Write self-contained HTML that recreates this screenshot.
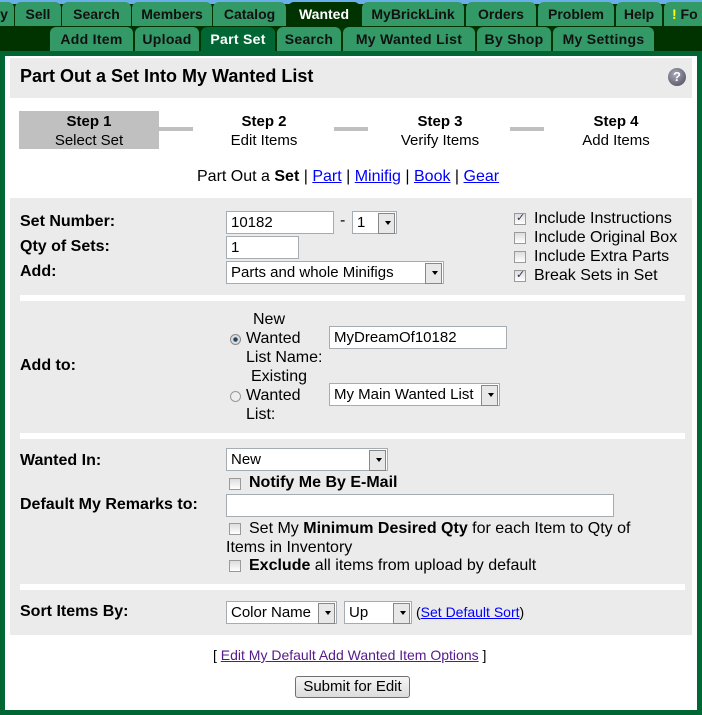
<!DOCTYPE html>
<html><head><style>
*{box-sizing:border-box}
body{margin:0;width:702px;height:715px;background:#003300;font-family:"Liberation Sans",sans-serif;position:relative;overflow:hidden;color:#000}
.a{position:absolute;white-space:nowrap}
.t{position:absolute;height:24px;background:#339966;border-radius:6px 6px 0 0;font-weight:bold;font-size:14px;text-align:center;line-height:24px;color:#111}
.t2{top:27px;height:24px;font-size:14px;letter-spacing:0.3px}
.lbl{position:absolute;font-weight:bold;font-size:16px}
.in{position:absolute;background:#fff;border:1px solid #a5acb2;font-size:15px;padding-left:4px;line-height:21px;height:23px}
.sel{position:absolute;background:#fff;border:1px solid #a5acb2;font-size:15px;padding-left:4px;line-height:21px;height:23px}
.sel:after{content:"";position:absolute;right:1px;top:1px;width:15px;height:19px;background:#e8e8e8;border:1px solid #888}
.sel b{position:absolute;right:5px;top:9px;width:0;height:0;border:3px solid transparent;border-top:4px solid #000;z-index:2}
.cb{position:absolute;width:12px;height:12px;border:1px solid #9a9a9a;background:linear-gradient(#ddd,#fff)}
.cb.c:after{content:"✓";position:absolute;left:1px;top:-3px;font-size:11px;color:#335}
.tx{position:absolute;font-size:16px;white-space:nowrap}
.sep{position:absolute;left:20px;width:665px;height:6px;background:#fff}
a{color:#00f}
</style></head><body>
<div class="a" style="left:0;top:0;width:702px;height:4px;background:#6ab0e8"></div>
<div class="t" style="left:-6px;width:20px;top:2px">y</div>
<div class="t" style="left:15px;width:46px;top:2px">Sell</div>
<div class="t" style="left:62px;width:69px;top:2px">Search</div>
<div class="t" style="left:132px;width:80px;top:2px">Members</div>
<div class="t" style="left:213px;width:73px;top:2px">Catalog</div>
<div class="t" style="left:288px;width:72px;top:2px;background:#003300;color:#fff">Wanted</div>
<div class="t" style="left:362px;width:102px;top:2px">MyBrickLink</div>
<div class="t" style="left:466px;width:70px;top:2px">Orders</div>
<div class="t" style="left:538px;width:76px;top:2px">Problem</div>
<div class="t" style="left:616px;width:46px;top:2px">Help</div>
<div class="t" style="left:664px;width:50px;top:2px;text-align:left;padding-left:8px"><span style="color:#ff0">!</span> Fo</div>
<div class="t t2" style="left:50px;width:83px">Add Item</div>
<div class="t t2" style="left:135px;width:64px">Upload</div>
<div class="t t2" style="left:201px;width:74px;background:#006633;color:#fff">Part Set</div>
<div class="t t2" style="left:277px;width:64px">Search</div>
<div class="t t2" style="left:343px;width:132px">My Wanted List</div>
<div class="t t2" style="left:477px;width:74px">By Shop</div>
<div class="t t2" style="left:553px;width:101px">My Settings</div>
<div class="a" style="left:0;top:51px;width:702px;height:664px;background:#006633"></div>
<div class="a" style="left:5px;top:56px;width:692px;height:654px;background:#fff"></div>
<div class="a" style="left:10px;top:58px;width:682px;height:40px;background:#ebebeb"></div>
<div class="a" style="left:20px;top:66px;font-size:18px;font-weight:bold">Part Out a Set Into My Wanted List</div>
<div class="a" style="left:668px;top:68px;width:18px;height:18px;border-radius:50%;background:radial-gradient(circle at 40% 35%,#aab,#445);color:#fff;font-weight:bold;font-size:13px;text-align:center;line-height:18px">?</div>
<div class="a" style="left:19px;top:111px;width:140px;height:38px;background:#c0c0c0"></div>
<div class="a" style="left:159px;top:127px;width:34px;height:4px;background:#c0c0c0"></div>
<div class="a" style="left:334px;top:127px;width:34px;height:4px;background:#c0c0c0"></div>
<div class="a" style="left:510px;top:127px;width:34px;height:4px;background:#c0c0c0"></div>
<div class="a" style="left:19px;top:112px;width:140px;text-align:center;font-size:15px;line-height:19px"><b>Step 1</b><br>Select Set</div>
<div class="a" style="left:194px;top:112px;width:140px;text-align:center;font-size:15px;line-height:19px"><b>Step 2</b><br>Edit Items</div>
<div class="a" style="left:370px;top:112px;width:140px;text-align:center;font-size:15px;line-height:19px"><b>Step 3</b><br>Verify Items</div>
<div class="a" style="left:546px;top:112px;width:140px;text-align:center;font-size:15px;line-height:19px"><b>Step 4</b><br>Add Items</div>
<div class="a" style="left:197px;top:168px;font-size:16px">Part Out a <b>Set</b> | <a href="#">Part</a> | <a href="#">Minifig</a> | <a href="#">Book</a> | <a href="#">Gear</a></div>
<div class="a" style="left:10px;top:198px;width:682px;height:437px;background:#ebebeb"></div>
<div class="lbl" style="left:20px;top:213px">Set Number:</div>
<div class="lbl" style="left:20px;top:238px">Qty of Sets:</div>
<div class="lbl" style="left:20px;top:263px">Add:</div>
<div class="in" style="left:226px;top:211px;width:108px">10182</div>
<div class="tx" style="left:340px;top:212px">-</div>
<div class="sel" style="left:352px;top:211px;width:45px">1<b></b></div>
<div class="in" style="left:226px;top:236px;width:73px">1</div>
<div class="sel" style="left:226px;top:261px;width:218px">Parts and whole Minifigs<b></b></div>
<div class="cb c" style="left:514px;top:213px"></div><div class="tx" style="left:534px;top:210px">Include Instructions</div>
<div class="cb" style="left:514px;top:232px"></div><div class="tx" style="left:534px;top:229px">Include Original Box</div>
<div class="cb" style="left:514px;top:251px"></div><div class="tx" style="left:534px;top:248px">Include Extra Parts</div>
<div class="cb c" style="left:514px;top:270px"></div><div class="tx" style="left:534px;top:267px">Break Sets in Set</div>
<div class="sep" style="top:295px"></div>
<div class="lbl" style="left:20px;top:357px">Add to:</div>
<div class="a" style="left:230px;top:334px;width:11px;height:11px;border-radius:50%;border:1px solid #888;background:radial-gradient(#246 30%,#ddd 40%)"></div>
<div class="tx" style="left:253px;top:310px;line-height:19px">New</div>
<div class="tx" style="left:246px;top:329px;line-height:19px">Wanted<br>List Name:</div>
<div class="in" style="left:329px;top:326px;width:178px">MyDreamOf10182</div>
<div class="a" style="left:230px;top:391px;width:11px;height:11px;border-radius:50%;border:1px solid #999;background:#eee"></div>
<div class="tx" style="left:251px;top:367px;line-height:19px">Existing</div>
<div class="tx" style="left:246px;top:386px;line-height:19px">Wanted<br>List:</div>
<div class="sel" style="left:329px;top:383px;width:171px">My Main Wanted List<b></b></div>
<div class="sep" style="top:433px"></div>
<div class="lbl" style="left:20px;top:452px">Wanted In:</div>
<div class="sel" style="left:226px;top:448px;width:162px">New<b></b></div>
<div class="cb" style="left:229px;top:478px"></div><div class="tx" style="left:249px;top:474px;font-weight:bold">Notify Me By E-Mail</div>
<div class="lbl" style="left:20px;top:496px">Default My Remarks to:</div>
<div class="in" style="left:226px;top:494px;width:388px"></div>
<div class="cb" style="left:229px;top:523px"></div>
<div class="tx" style="left:226px;top:519px;line-height:19px;white-space:normal;width:430px;text-indent:23px">Set My <b>Minimum Desired Qty</b> for each Item to Qty of Items in Inventory</div>
<div class="cb" style="left:229px;top:560px"></div><div class="tx" style="left:249px;top:557px"><b>Exclude</b> all items from upload by default</div>
<div class="sep" style="top:584px"></div>
<div class="lbl" style="left:20px;top:603px">Sort Items By:</div>
<div class="sel" style="left:226px;top:601px;width:111px">Color Name<b></b></div>
<div class="sel" style="left:344px;top:601px;width:68px">Up<b></b></div>
<div class="tx" style="left:416px;top:604px;font-size:14px">(<a href="#">Set Default Sort</a>)</div>
<div class="tx" style="left:213px;top:647px;font-size:14px">[ <a href="#" style="color:#551a8b">Edit My Default Add Wanted Item Options</a> ]</div>
<div class="a" style="left:295px;top:676px;width:115px;height:22px;border:1px solid #707070;border-radius:3px;background:linear-gradient(#f6f6f6,#dcdcdc);font-size:15px;text-align:center;line-height:20px">Submit for Edit</div>
</body></html>
